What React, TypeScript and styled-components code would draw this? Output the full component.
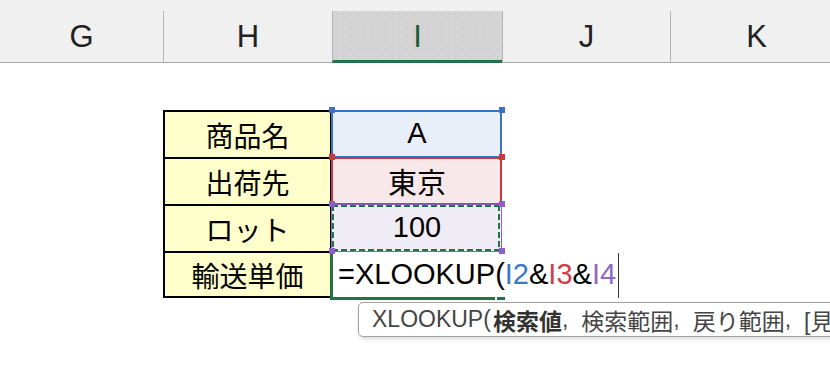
import React from "react";
import styled, { createGlobalStyle } from "styled-components";

const GlobalStyle = createGlobalStyle`
  html, body { margin: 0; padding: 0; background: #fff; }
  #root { width: 830px; height: 390px; }
`;

const COLS = "163px 169px 170px 168px 172px";
const GREEN = "#217346";
const FONT = `"Liberation Sans", "Noto Sans CJK JP", sans-serif`;

const Sheet = styled.div`
  position: relative;
  width: 830px;
  height: 390px;
  overflow: hidden;
  background: #fff;
  font-family: ${FONT};
  color: #000;
`;

const TopStrip = styled.div`
  height: 11px;
  background: #f0f0f0;
`;

const HeaderRow = styled.div`
  display: grid;
  grid-template-columns: ${COLS};
  height: 52px;
  background: #f0f0f0;
`;

const HeaderCell = styled.div<{ $selected?: boolean; $first?: boolean }>`
  box-sizing: border-box;
  display: flex;
  align-items: center;
  justify-content: center;
  font-size: 31px;
  color: ${(p) => (p.$selected ? "#1d5e38" : "#222")};
  border-left: ${(p) => (p.$first ? "none" : "1px solid #b4b4b4")};
  border-bottom: ${(p) => (p.$selected ? `3px solid ${GREEN}` : "1px solid #a6a6a6")};
  padding-top: ${(p) => (p.$selected ? "2px" : "0")};
  background: ${(p) =>
    p.$selected
      ? "radial-gradient(circle, #bdbdbd 0.7px, transparent 1px) 0 0 / 7px 7px, #d4d4d4"
      : "transparent"};
`;

const Row = styled.div`
  display: grid;
  grid-template-columns: ${COLS};
  height: 47px;
`;

const EmptyCell = styled.div``;

const LabelCell = styled.div<{ $first?: boolean; $last?: boolean }>`
  box-sizing: border-box;
  background: #ffffcc;
  border-left: 2px solid #000;
  border-right: 2px solid #000;
  border-top: 2px solid #000;
  border-bottom: ${(p) => (p.$last ? "2px solid #000" : "none")};
  display: flex;
  align-items: center;
  justify-content: center;
  font-family: "Noto Sans CJK JP", sans-serif;
  font-size: 28px;
`;

const RefCell = styled.div<{ $fill: string }>`
  position: relative;
  background: ${(p) => p.$fill};
  display: flex;
  align-items: center;
  justify-content: center;
  font-size: 29px;
`;

const Frame = styled.div<{ $color: string; $w: number }>`
  position: absolute;
  top: 0;
  left: -1px;
  right: 0;
  bottom: -1px;
  border: ${(p) => p.$w}px solid ${(p) => p.$color};
  pointer-events: none;
  z-index: 1;
`;

const dashH = `repeating-linear-gradient(90deg, ${GREEN} 0 6px, transparent 6px 9px)`;
const dashV = `repeating-linear-gradient(180deg, ${GREEN} 0 6px, transparent 6px 9px)`;

const Marquee = styled.div`
  position: absolute;
  top: 1px;
  left: 0;
  right: 2px;
  bottom: 0;
  background: ${dashH} top left / 100% 2px no-repeat, ${dashH} bottom left / 100% 2px no-repeat,
    ${dashV} top left / 2px 100% no-repeat, ${dashV} top right / 2px 100% no-repeat;
  pointer-events: none;
  z-index: 2;
`;

const Handle = styled.span<{ $color: string; $h: "left" | "right"; $v: "top" | "bottom" }>`
  position: absolute;
  width: 6px;
  height: 6px;
  background: ${(p) => p.$color};
  ${(p) => p.$h}: -3px;
  ${(p) => p.$v}: -3px;
  z-index: 3;
`;

const ActiveCell = styled.div`
  position: relative;
  display: flex;
  align-items: center;
  padding-left: 6px;
  white-space: nowrap;
  font-size: 29px;
`;

const ActiveFrame = styled.div`
  position: absolute;
  top: 1px;
  left: -2px;
  right: -3px;
  bottom: -2px;
  border-left: 3px solid ${GREEN};
  border-bottom: 3px solid ${GREEN};
  pointer-events: none;
`;

const FillGap = styled.span`
  position: absolute;
  left: 163px;
  bottom: -2px;
  width: 2px;
  height: 3px;
  background: #fff;
`;

const Ref = styled.span<{ $color: string }>`
  color: ${(p) => p.$color};
`;

const Caret = styled.span`
  display: inline-block;
  width: 1px;
  height: 45px;
  margin-left: 2px;
  background: #333;
  flex: none;
  margin-top: 2px;
`;

const Tooltip = styled.div`
  position: absolute;
  left: 358px;
  top: 302px;
  width: 520px;
  height: 35px;
  box-sizing: border-box;
  border: 1px solid #a3a3a3;
  border-radius: 5px;
  background: #fff;
  box-shadow: 1px 2px 4px rgba(0, 0, 0, 0.16);
  padding-left: 13px;
  display: flex;
  align-items: center;
  white-space: nowrap;
  font-size: 23px;
  color: #454545;
  z-index: 5;
`;

const Strong = styled.b`
  font-weight: 700;
  color: #333;
  margin-left: 2px;
`;

const Sep = styled.span`
  margin-right: 13px;
`;

const BLUE = "#3a72c8";
const RED = "#c8383f";
const PURPLE = "#8d61c6";

type RefDef = { label: string; value: string; color: string; fill: string; marquee?: boolean };

const refs: RefDef[] = [
  { label: "商品名", value: "A", color: BLUE, fill: "#e9eff9" },
  { label: "出荷先", value: "東京", color: RED, fill: "#f9e8ea" },
  { label: "ロット", value: "100", color: PURPLE, fill: "#f0ecf5", marquee: true },
];

function Handles({ color }: { color: string }) {
  return (
    <>
      <Handle $color={color} $h="left" $v="top" />
      <Handle $color={color} $h="right" $v="top" />
      <Handle $color={color} $h="left" $v="bottom" />
      <Handle $color={color} $h="right" $v="bottom" />
    </>
  );
}

function EmptyRow() {
  return (
    <Row>
      <EmptyCell />
      <EmptyCell />
      <EmptyCell />
      <EmptyCell />
      <EmptyCell />
    </Row>
  );
}

export default function App() {
  const headers = ["G", "H", "I", "J", "K"];
  return (
    <Sheet>
      <GlobalStyle />
      <TopStrip />
      <HeaderRow>
        {headers.map((h, i) => (
          <HeaderCell key={h} $first={i === 0} $selected={h === "I"}>
            {h}
          </HeaderCell>
        ))}
      </HeaderRow>
      <EmptyRow />
      {refs.map((r, i) => (
        <Row key={r.label}>
          <EmptyCell />
          <LabelCell $first={i === 0}>{r.label}</LabelCell>
          <RefCell $fill={r.fill}>
            {r.value}
            <Frame $color={r.color} $w={r.marquee ? 1 : 2} />
            {r.marquee && <Marquee />}
            <Handles color={r.color} />
          </RefCell>
          <EmptyCell />
          <EmptyCell />
        </Row>
      ))}
      <Row>
        <EmptyCell />
        <LabelCell $last>輸送単価</LabelCell>
        <ActiveCell>
          <span>
            =XLOOKUP(<Ref $color="#3b78cc">I2</Ref>&amp;<Ref $color="#cf3f49">I3</Ref>&amp;
            <Ref $color="#9066c8">I4</Ref>
          </span>
          <Caret />
          <ActiveFrame />
          <FillGap />
        </ActiveCell>
        <EmptyCell />
        <EmptyCell />
      </Row>
      <EmptyRow />
      <EmptyRow />
      <Tooltip>
        XLOOKUP(<Strong>検索値</Strong>
        <Sep>,</Sep>検索範囲<Sep>,</Sep>戻り範囲<Sep>,</Sep>[見つからない場合]
      </Tooltip>
    </Sheet>
  );
}
